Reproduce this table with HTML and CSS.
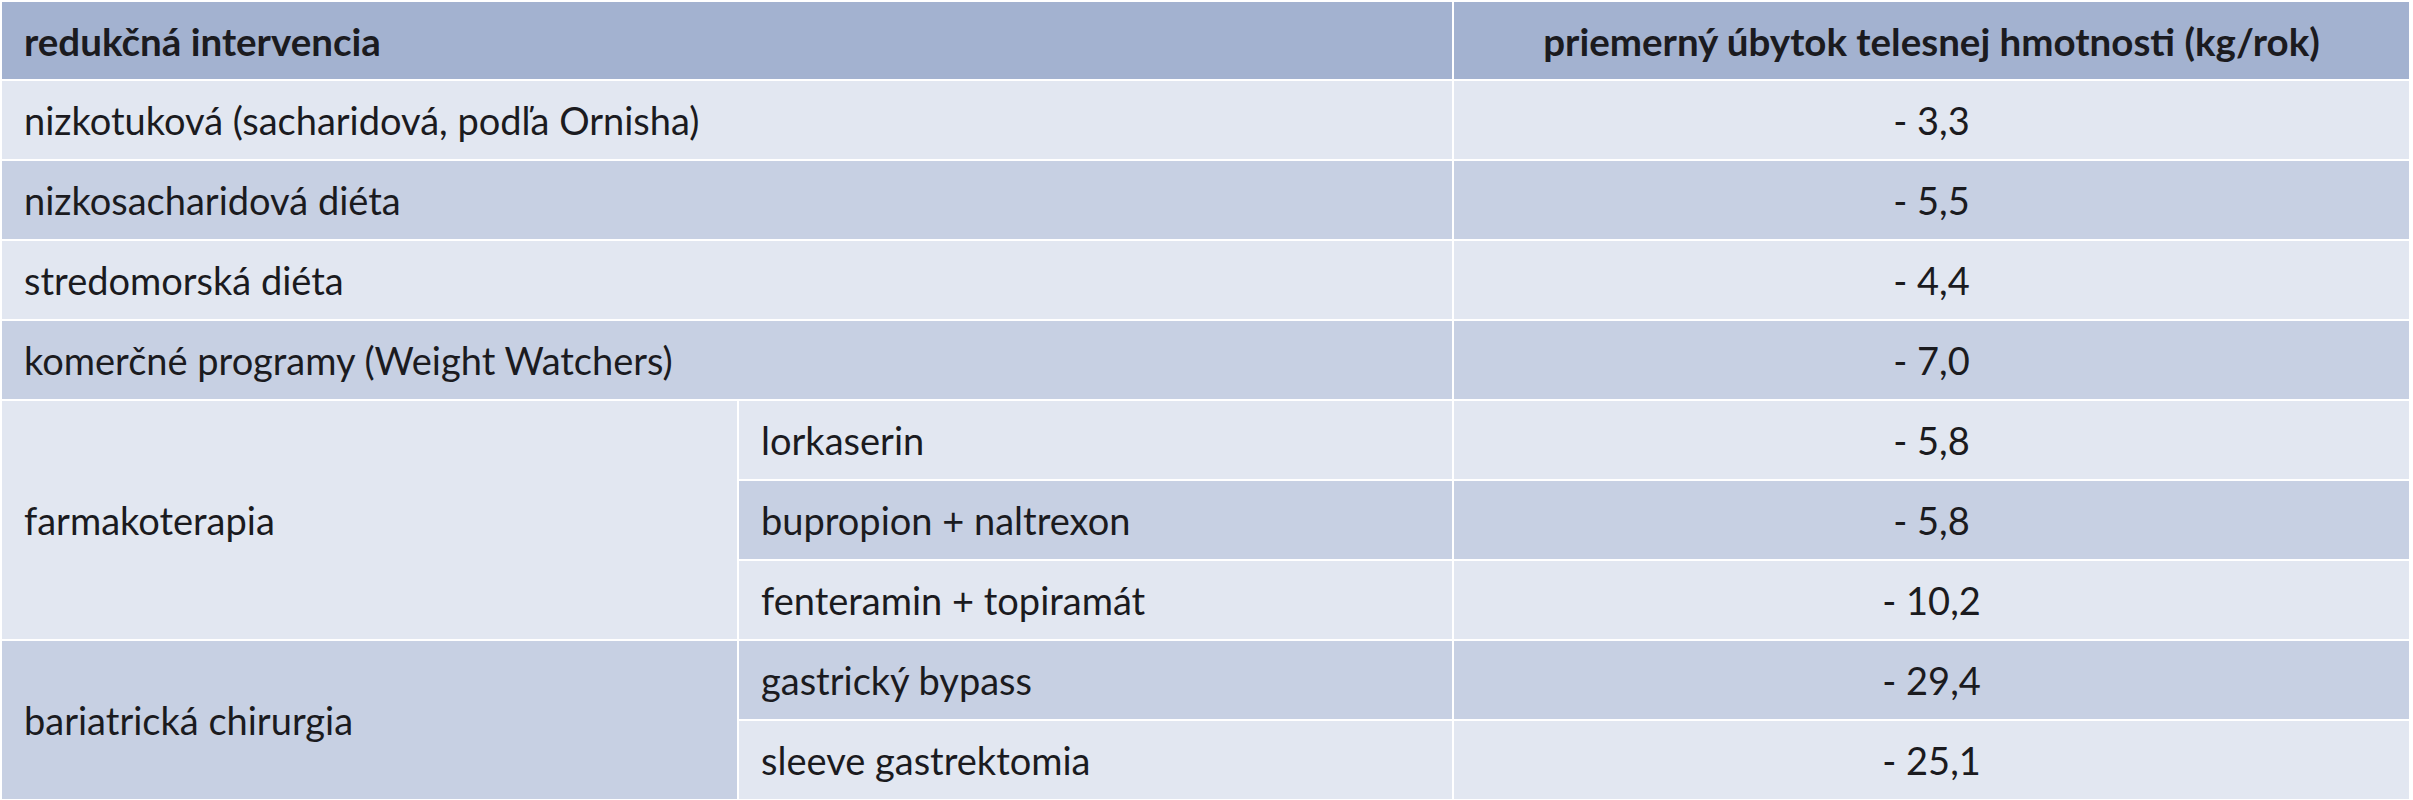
FILE: index.html
```html
<!DOCTYPE html>
<html lang="sk">
<head>
<meta charset="utf-8">
<title>Redukčné intervencie</title>
<link rel="stylesheet" href="styles.css">
</head>
<body>
<table class="tbl">
  <colgroup>
    <col class="c1">
    <col class="c2">
    <col class="c3">
  </colgroup>
  <thead>
    <tr class="head">
      <th colspan="2" class="left">redukčná intervencia</th>
      <th class="val">priemerný úbytok telesnej hmotnosti (kg/rok)</th>
    </tr>
  </thead>
  <tbody>
    <tr class="light">
      <td colspan="2">nizkotuková (sacharidová, podľa Ornisha)</td>
      <td class="val">- 3,3</td>
    </tr>
    <tr class="dark">
      <td colspan="2">nizkosacharidová diéta</td>
      <td class="val">- 5,5</td>
    </tr>
    <tr class="light">
      <td colspan="2">stredomorská diéta</td>
      <td class="val">- 4,4</td>
    </tr>
    <tr class="dark">
      <td colspan="2">komerčné programy (Weight Watchers)</td>
      <td class="val">- 7,0</td>
    </tr>
    <tr class="light">
      <td rowspan="3" class="group light">farmakoterapia</td>
      <td>lorkaserin</td>
      <td class="val">- 5,8</td>
    </tr>
    <tr class="dark">
      <td>bupropion + naltrexon</td>
      <td class="val">- 5,8</td>
    </tr>
    <tr class="light">
      <td>fenteramin + topiramát</td>
      <td class="val">- 10,2</td>
    </tr>
    <tr class="dark">
      <td rowspan="2" class="group dark">bariatrická chirurgia</td>
      <td>gastrický bypass</td>
      <td class="val">- 29,4</td>
    </tr>
    <tr class="light">
      <td>sleeve gastrektomia</td>
      <td class="val">- 25,1</td>
    </tr>
  </tbody>
</table>
</body>
</html>
```

FILE: styles.css
```css
html, body {
  margin: 0;
  padding: 0;
  background: #ffffff;
}

.tbl {
  border-collapse: separate;
  border-spacing: 2px;
  width: 2411px;
  table-layout: fixed;
  font-family: Lato, "Noto Sans", sans-serif;
  font-size: 38px;
  color: #1b1b1f;
}

.c1 { width: 735px; }
.c2 { width: 713px; }
.c3 { width: 955px; }

.tbl th,
.tbl td {
  height: 78px;
  padding: 0 0 0 22px;
  text-align: left;
  vertical-align: middle;
  font-weight: 400;
  white-space: nowrap;
}

.head th {
  height: 77px;
  background: #a3b2d0;
  font-weight: 700;
  font-size: 38.5px;
}

.tbl .val {
  text-align: center;
  padding: 0;
}

.light td { background: #e2e7f1; }
.dark td { background: #c7d0e3; }

.tbl td.group.light { background: #e2e7f1; }
.tbl td.group.dark { background: #c7d0e3; }
```
